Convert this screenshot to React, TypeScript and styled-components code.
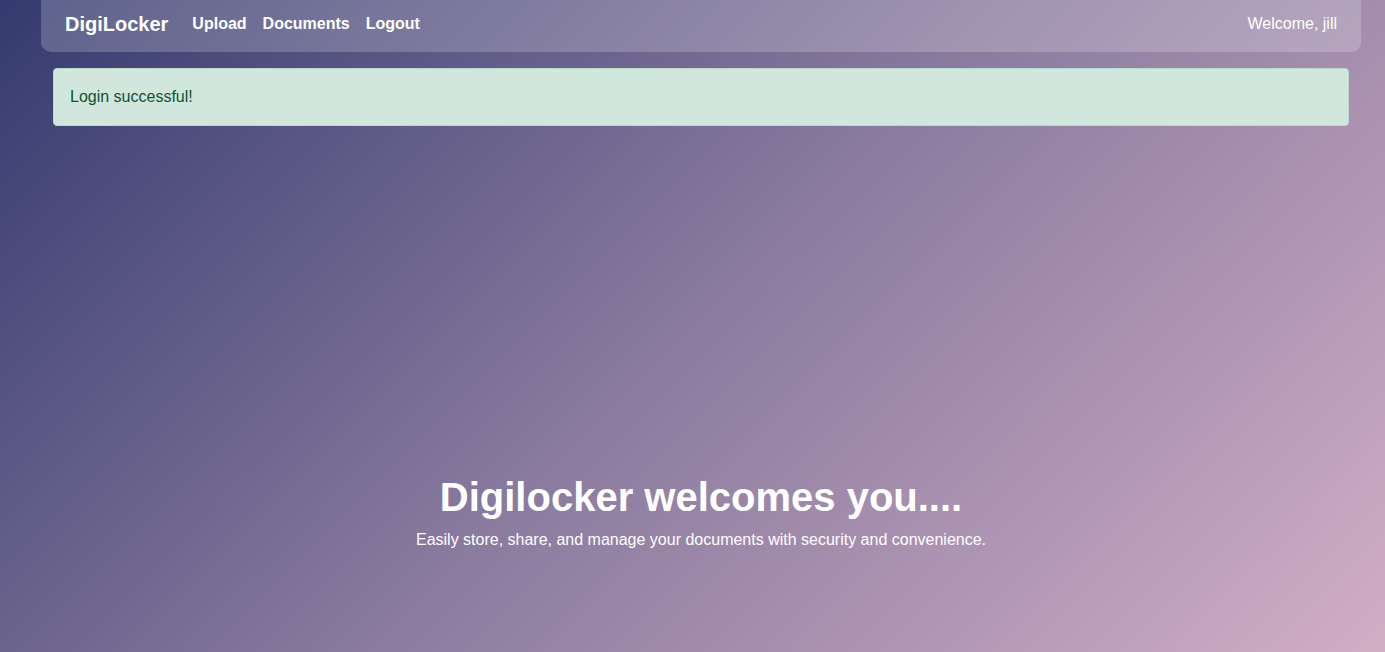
import styled, { createGlobalStyle } from "styled-components"

const GlobalStyle = createGlobalStyle`
    * {
        box-sizing: border-box;
    }

    html, body {
        margin: 0;
        padding: 0;
    }

    body {
        min-height: 100vh;
        font-family: "Liberation Sans", Arial, sans-serif;
        background: linear-gradient(135deg, #343a6f 0%, #8a7b9f 50%, #d2aec6 100%);
        background-attachment: fixed;
        color: #fff;
    }
`

const Page = styled.div`
    min-height: 100vh;
    padding: 0 24px 0 41px;
`

const Nav = styled.nav`
    height: 52px;
    display: flex;
    align-items: center;
    justify-content: space-between;
    padding: 0 24px 4px;
    background: rgba(255, 255, 255, 0.2);
    border-radius: 0 0 10px 10px;
`

const NavLeft = styled.div`
    display: flex;
    align-items: center;
    gap: 16px;
`

const Brand = styled.a`
    font-size: 20px;
    font-weight: 700;
    color: #fff;
    text-decoration: none;
    margin-right: 8px;
`

const NavLink = styled.a`
    font-size: 16px;
    font-weight: 700;
    color: #fff;
    text-decoration: none;
`

const Welcome = styled.span`
    font-size: 16px;
    color: #fff;
`

const Content = styled.main`
    padding: 16px 12px 0;
`

const Alert = styled.div`
    padding: 16px;
    font-size: 16px;
    line-height: 24px;
    color: #0f5132;
    background: #d1e7dd;
    border: 1px solid #badbcc;
    border-radius: 4px;
`

const Hero = styled.section`
    margin-top: 347px;
    text-align: center;
`

const Title = styled.h1`
    margin: 0;
    font-size: 40px;
    line-height: 48px;
    font-weight: 700;
`

const Subtitle = styled.p`
    margin: 7px 0 0;
    font-size: 16px;
    line-height: 24px;
`

export default function App() {
    return (
        <>
            <GlobalStyle />
            <Page>
                <Nav>
                    <NavLeft>
                        <Brand href="#">DigiLocker</Brand>
                        <NavLink href="#">Upload</NavLink>
                        <NavLink href="#">Documents</NavLink>
                        <NavLink href="#">Logout</NavLink>
                    </NavLeft>
                    <Welcome>Welcome, jill</Welcome>
                </Nav>
                <Content>
                    <Alert>Login successful!</Alert>
                    <Hero>
                        <Title>Digilocker welcomes you....</Title>
                        <Subtitle>Easily store, share, and manage your documents with security and convenience.</Subtitle>
                    </Hero>
                </Content>
            </Page>
        </>
    )
}
